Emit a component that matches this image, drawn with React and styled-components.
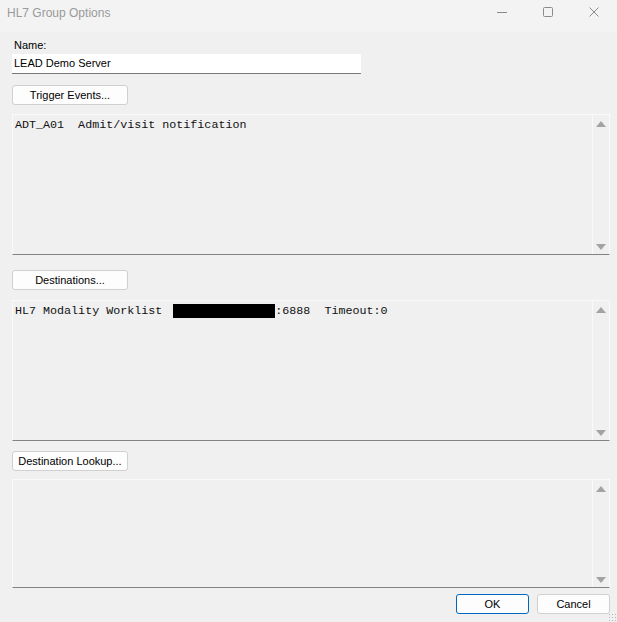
import React from "react";
import styled, { createGlobalStyle } from "styled-components";

const GlobalStyle = createGlobalStyle`
  html, body {
    margin: 0;
    padding: 0;
    background: #f0f0f0;
  }
  * {
    box-sizing: border-box;
  }
`;

const Window = styled.div`
  width: 617px;
  height: 622px;
  background: #f0f0f0;
  font-family: "Liberation Sans", Arial, sans-serif;
  font-size: 11px;
  color: #000;
  display: flex;
  flex-direction: column;
  position: relative;
  overflow: hidden;
`;

const TitleBar = styled.div`
  height: 32px;
  flex: none;
  background: #f3f3f3;
  display: flex;
  align-items: center;
  padding-left: 7px;
`;

const Title = styled.div`
  flex: 1;
  font-size: 12px;
  color: #9a9a9a;
  margin-top: -6px;
`;

const Caption = styled.div`
  width: 46px;
  height: 32px;
  display: flex;
  align-items: center;
  justify-content: center;
  margin-top: -8px;
`;

const Body = styled.div`
  flex: 1;
  display: flex;
  flex-direction: column;
  padding: 7px 8px 0 12px;
`;

const Label = styled.div`
  height: 15px;
  padding-left: 2px;
  line-height: 13px;
`;

const NameInput = styled.div`
  width: 349px;
  height: 20px;
  background: #fff;
  border-bottom: 1px solid #7a7a7a;
  padding: 0 2px;
  line-height: 19px;
  margin-bottom: 11px;
`;

const Button = styled.div`
  width: ${(p) => p.$w || 116}px;
  height: 20px;
  border: 1px solid ${(p) => (p.$primary ? "#0067c0" : "#d0d0d0")};
  border-radius: 3px;
  background: #fdfdfd;
  display: flex;
  align-items: center;
  justify-content: center;
  line-height: 1;
  flex: none;
  margin-bottom: ${(p) => p.$mb || 0}px;
  margin-left: ${(p) => p.$ml || 0}px;
`;

const ListBox = styled.div`
  width: 598px;
  height: ${(p) => p.$h}px;
  flex: none;
  border: 1px solid #fafafa;
  border-bottom: 1px solid #838383;
  display: flex;
  margin-bottom: ${(p) => p.$mb || 0}px;
`;

const ListContent = styled.div`
  flex: 1;
  padding: 3px 2px;
  font-family: "Liberation Mono", "Courier New", monospace;
  font-size: 11.7px;
  line-height: 14px;
  white-space: pre;
  color: #111;
`;

const Redacted = styled.span`
  display: inline-block;
  width: 102px;
  height: 14px;
  background: #000;
  vertical-align: top;
  margin-left: 11px;
`;

const ScrollBar = styled.div`
  width: 17px;
  border-left: 1px solid #fafafa;
  display: flex;
  flex-direction: column;
  justify-content: space-between;
  align-items: center;
  padding: 6px 0 4px;
`;

const Arrow = styled.div`
  width: 0;
  height: 0;
  border-left: 5px solid transparent;
  border-right: 5px solid transparent;
  ${(p) =>
    p.$down
      ? "border-top: 6px solid #a3a3a3;"
      : "border-bottom: 6px solid #a3a3a3;"}
`;

const Footer = styled.div`
  display: flex;
  justify-content: flex-end;
  padding-top: 6px;
  width: 598px;
`;

const Grip = styled.div`
  position: absolute;
  right: 1px;
  bottom: 1px;
  width: 8px;
  height: 8px;
  background-image: radial-gradient(circle, #b8b8b8 0.8px, transparent 1px);
  background-size: 3px 3px;
`;

const Scroll = () => (
  <ScrollBar>
    <Arrow />
    <Arrow $down />
  </ScrollBar>
);

export default function App() {
  return (
    <>
      <GlobalStyle />
      <Window>
        <TitleBar>
          <Title>HL7 Group Options</Title>
          <Caption>
            <svg width="10" height="10" viewBox="0 0 10 10">
              <path d="M0 5.5h10" stroke="#8a8a8a" strokeWidth="1" />
            </svg>
          </Caption>
          <Caption>
            <svg width="10" height="10" viewBox="0 0 10 10">
              <rect x="0.5" y="0.5" width="9" height="9" rx="1" fill="none" stroke="#8a8a8a" />
            </svg>
          </Caption>
          <Caption>
            <svg width="10" height="10" viewBox="0 0 10 10">
              <path d="M0.5 0.5l9 9M9.5 0.5l-9 9" stroke="#8a8a8a" strokeWidth="1" />
            </svg>
          </Caption>
        </TitleBar>
        <Body>
          <Label>Name:</Label>
          <NameInput>LEAD Demo Server</NameInput>
          <Button $mb={9}>Trigger Events...</Button>
          <ListBox $h={141} $mb={15}>
            <ListContent>ADT_A01  Admit/visit notification</ListContent>
            <Scroll />
          </ListBox>
          <Button $mb={10}>Destinations...</Button>
          <ListBox $h={141} $mb={10}>
            <ListContent>
              HL7 Modality Worklist<Redacted />:6888  Timeout:0
            </ListContent>
            <Scroll />
          </ListBox>
          <Button $mb={8}>Destination Lookup...</Button>
          <ListBox $h={109}>
            <ListContent />
            <Scroll />
          </ListBox>
          <Footer>
            <Button $w={73} $primary>OK</Button>
            <Button $w={73} $ml={8}>Cancel</Button>
          </Footer>
        </Body>
        <Grip />
      </Window>
    </>
  );
}
